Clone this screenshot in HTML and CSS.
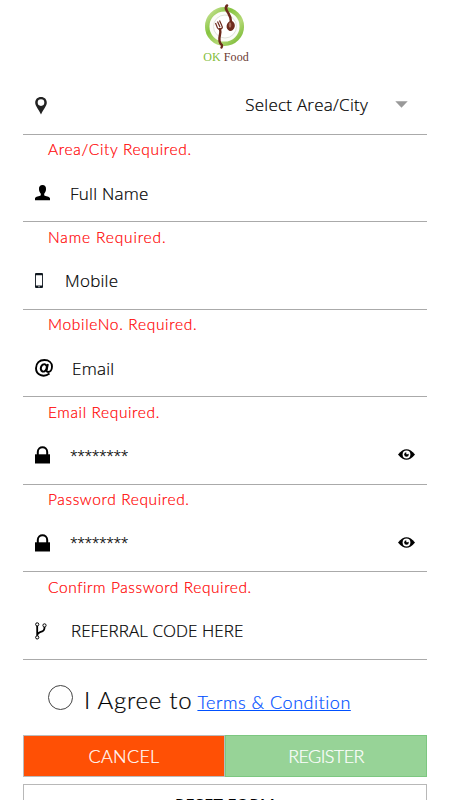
FILE: index.html
```html
<!DOCTYPE html>
<html lang="en">
<head>
<meta charset="utf-8">
<title>OK Food</title>
<link rel="stylesheet" href="styles.css">
</head>
<body>
<main class="page">
  <header class="brand">
    <svg class="brand-mark" width="42" height="48" viewBox="0 0 42 48">
      <defs><linearGradient id="ring" x1="0" y1="0" x2="1" y2="1"><stop offset="0" stop-color="#d0e6a0"/><stop offset=".35" stop-color="#86c440"/><stop offset=".65" stop-color="#b5d977"/><stop offset="1" stop-color="#70b52a"/></linearGradient></defs>
      <circle cx="20.5" cy="22.5" r="17.3" fill="#fbfcf8" stroke="url(#ring)" stroke-width="4.5"/>
      <circle cx="21" cy="22.5" r="11.5" fill="#fff" stroke="#e0e2dc"/>
      <path d="M23 1.5C20.5 4 22.5 6.5 24.5 9.5S26.8 14 27 18" fill="none" stroke="#6d2a1c" stroke-width="2.5" stroke-linecap="round"/>
      <ellipse cx="26.7" cy="22" rx="4.1" ry="5" fill="#6d2a1c" transform="rotate(12 26.7 22)"/>
      <ellipse cx="26" cy="21" rx="1.3" ry="2.8" fill="#a86d5c"/>
      <path d="M11.5 19L13.5 24Q15 26 17 25Q19 24 18 22L15.5 16.5M13.5 17.5L16 23" fill="none" stroke="#6d2a1c" stroke-width="1.2"/>
      <path d="M16 25C17.5 30 14.5 32 15.5 37S19.5 40 17.5 43.5" fill="none" stroke="#6d2a1c" stroke-width="2.4" stroke-linecap="round"/>
    </svg>
    <div class="brand-name"><span>OK</span> Food</div>
  </header>

  <form class="form">
    <div class="field">
      <svg class="icon lower" width="12" height="18" viewBox="0 0 12 18"><path fill="#222" fill-rule="evenodd" d="M6 0C2.5 0 .2 2.4.2 5.7.2 9 3.8 12.5 6 17.4 8.2 12.5 11.8 9 11.8 5.7 11.8 2.4 9.5 0 6 0ZM6 2.3A3.3 3.3 0 1 1 6 8.9 3.3 3.3 0 0 1 6 2.3Z"/></svg>
      <span class="value area">Select Area/City</span>
      <svg class="caret" width="13" height="7" viewBox="0 0 13 7"><path fill="#999" d="M.3.3H12.7L6.5 6.7Z"/></svg>
    </div>
    <p class="error e-area">Area/City Required.</p>

    <div class="field">
      <svg class="icon lower" width="15" height="16" viewBox="0 0 15 16"><path d="M7.5 0C5 0 3.8 1.8 4 4.3 4.1 6.3 4.8 7.6 5.8 8.7V10.2C4.5 11.4.3 11.4 0 13.3V15.2H15V13.3C14.7 11.4 10.5 11.4 9.2 10.2V8.7C10.2 7.6 10.9 6.3 11 4.3 11.2 1.8 10 0 7.5 0Z"/></svg>
      <span class="value name">Full Name</span>
    </div>
    <p class="error e-name">Name Required.</p>

    <div class="field">
      <svg class="icon lower" width="8" height="15" viewBox="0 0 8 15"><path fill="#101820" fill-rule="evenodd" d="M1 0H7Q8 0 8 1V14Q8 15 7 15H1Q0 15 0 14V1Q0 0 1 0ZM.9 2.2V12.6H7.1V2.2ZM3.4 13.3V14.2H4.6V13.3Z"/></svg>
      <span class="value mobile">Mobile</span>
    </div>
    <p class="error e-mobile">MobileNo. Required.</p>

    <div class="field">
      <svg class="icon lower" width="18" height="18" viewBox="0 0 18 18" fill="none" stroke="#000"><path stroke-width="1.9" d="M14.5 14.5C9 18.8 1 16.3 1 9.2 1 4 4.6 1 9.4 1 14 1 17 3.8 17 7.5 17 11 15 13 13.1 13 11.4 13 11.5 11.8 11.8 10.3L12.9 5"/><ellipse stroke-width="2" cx="8.8" cy="8.9" rx="2.9" ry="3.8" transform="rotate(20 8.8 8.9)"/></svg>
      <span class="value email">Email</span>
    </div>
    <p class="error e-email">Email Required.</p>

    <div class="field">
      <svg class="icon" width="15" height="18" viewBox="0 0 15 18"><path d="M0 8.3H15V17.5H0Z"/><path fill="none" stroke="#000" stroke-width="2" d="M2.8 9V6C2.8-.3 12.2-.3 12.2 6V9"/></svg>
      <span class="value stars">********</span>
      <svg class="eye" width="17" height="11" viewBox="0 0 17 11"><path d="M0 5.5Q8.5-5 17 5.5 8.5 16 0 5.5Z"/><circle cx="8.5" cy="5.5" r="3.9" fill="#fff"/><circle cx="8.5" cy="5.5" r="2.3"/><path fill="#fff" d="M8.3 3H10.8V5.2H8.3Z"/></svg>
    </div>
    <p class="error e-pass">Password Required.</p>

    <div class="field">
      <svg class="icon lower" width="15" height="18" viewBox="0 0 15 18"><path d="M0 8.3H15V17.5H0Z"/><path fill="none" stroke="#000" stroke-width="2" d="M2.8 9V6C2.8-.3 12.2-.3 12.2 6V9"/></svg>
      <span class="value stars">********</span>
      <svg class="eye" width="17" height="11" viewBox="0 0 17 11"><path d="M0 5.5Q8.5-5 17 5.5 8.5 16 0 5.5Z"/><circle cx="8.5" cy="5.5" r="3.9" fill="#fff"/><circle cx="8.5" cy="5.5" r="2.3"/><path fill="#fff" d="M8.3 3H10.8V5.2H8.3Z"/></svg>
    </div>
    <p class="error e-confirm">Confirm Password Required.</p>

    <div class="field">
      <svg class="icon lower" width="12" height="18" viewBox="0 0 12 18" fill="none" stroke="#000"><circle cx="2.2" cy="2.4" r="1.6"/><circle cx="2.2" cy="15.4" r="1.6"/><circle cx="9.5" cy="3.4" r="1.6"/><path stroke-width="1.8" d="M2.2 4V13.8M9.5 5C9.8 9.5 7 9.5 4.7 10.3 3 10.9 2.2 12 2.2 13.8"/></svg>
      <span class="value referral">REFERRAL CODE HERE</span>
    </div>

    <div class="agree">
      <span class="check"></span>
      <span class="agree-text">I Agree to</span>
      <a class="terms" href="#">Terms &amp; Condition</a>
    </div>

    <div class="actions">
      <button type="button" class="btn cancel">CANCEL</button>
      <button type="button" class="btn register">REGISTER</button>
    </div>
    <button type="button" class="reset">RESET FORM</button>
  </form>
</main>
</body>
</html>
```
FILE: styles.css
```css
* { box-sizing: border-box; }
body { margin: 0; background: #fff; color: #000; font-family: "Open Sans", "Noto Sans", sans-serif; }
.page { height: 800px; overflow: hidden; padding: 0 23px; }
.brand { height: 74.5px; padding-top: 4px; display: flex; flex-direction: column; align-items: center; }
.brand-mark { flex: none; }
.brand-name { margin-top: -2px; padding-left: 2px; font: 12px/14px "Liberation Serif", serif; color: #6b3a32; white-space: nowrap; letter-spacing: .1px; }
.brand-name span { color: #82bd3b; }
.form { display: flex; flex-direction: column; }
.field { height: 60px; border-bottom: 1px solid #aaa; display: flex; align-items: center; padding: 1px 12px 0; }
.icon { flex: none; }
.lower { margin-top: 2px; }
.value { font-size: 17px; font-weight: 350; line-height: 24px; white-space: nowrap; letter-spacing: .25px; -webkit-text-stroke: .2px; }
.area { margin-left: auto; margin-top: 1px; }
.caret { margin: 0 7px 0 27px; }
.name { margin: 4px 0 0 20px; }
.mobile { margin: 3px 0 0 22px; }
.email { margin: 4px 0 0 19px; }
.stars { margin: 2px 0 0 20px; font-size: 14px; letter-spacing: -.45px; }
.referral { margin: 3px 0 0 24px; letter-spacing: .05px; }
.eye { margin-left: auto; }
.error { margin: 0; height: 27.5px; padding: 2px 0 0 25px; color: #ff0000; font: 300 15.5px/24px Lato, sans-serif; white-space: nowrap; -webkit-text-stroke: .2px; }
.e-area, .e-mobile { letter-spacing: .67px; }
.e-name { padding-top: 3px; letter-spacing: .85px; }
.e-email { padding-top: 3px; letter-spacing: .62px; }
.e-pass { letter-spacing: .62px; }
.e-confirm { padding-top: 3px; letter-spacing: .58px; }
.agree { height: 75.5px; padding-left: 25px; display: flex; align-items: center; }
.check { flex: none; width: 25px; height: 25px; border: 1px solid #444; border-radius: 50%; }
.agree-text { margin: 6px 0 0 11px; font: 300 24px/30px Lato, sans-serif; letter-spacing: .75px; white-space: nowrap; -webkit-text-stroke: .2px; }
.terms { margin: 10px 0 0 5px; color: #0050ff; font: 300 18px/24px Lato, sans-serif; letter-spacing: .53px; white-space: nowrap; -webkit-text-stroke: .2px; }
.actions { display: grid; grid-template-columns: 202px 202px; height: 42px; }
.btn { margin: 0; padding: 0; font: 300 18px/24px Lato, sans-serif; color: #fff; border: 1px solid #bbb; -webkit-text-stroke: .2px; }
.cancel { background: #ff5005; letter-spacing: .3px; }
.register { background: #97d397; border-color: #7cc780; letter-spacing: -.6px; }
.reset { margin: 7px 0 0; width: 404px; height: 42px; padding: 0 0 1px; background: #fff; border: 1px solid #b8b8b8; font: 17px/24px "Open Sans", sans-serif; color: #000; }
```
